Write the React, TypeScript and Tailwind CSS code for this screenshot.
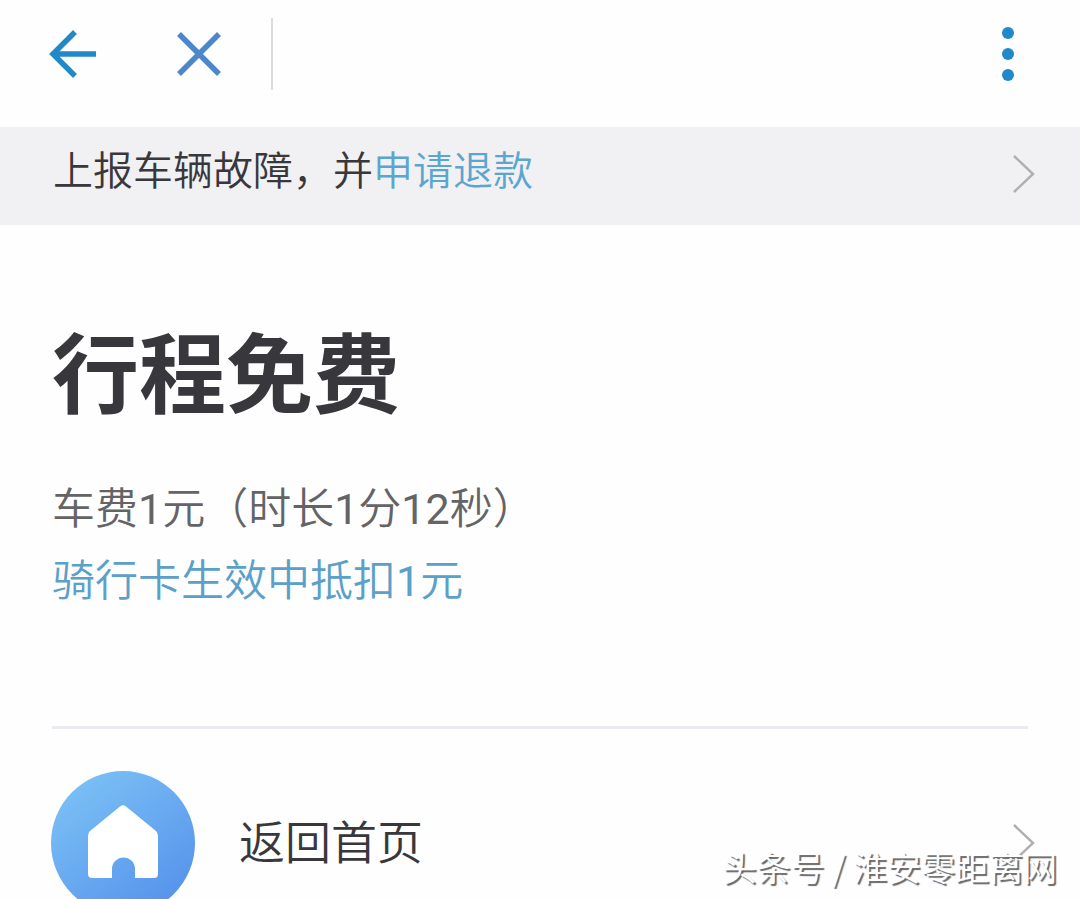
function Chevron() {
  return (
    <svg viewBox="0 0 24 40" className="h-10 w-6 shrink-0" fill="none" stroke="#b0b0b2" strokeWidth="2.5" aria-hidden="true">
      <path d="M2 2 L21 20 L2 38" />
    </svg>
  );
}

function TopBar() {
  return (
    <header className="flex h-[127px] items-start pl-12 pr-12">
      <button type="button" aria-label="返回" className="mt-7 flex h-[52px] w-[50px] items-center">
        <svg viewBox="0 0 50 52" className="h-[52px] w-[50px]" fill="none" stroke="#2389c6" strokeWidth="5.5" aria-hidden="true">
          <path d="M27 4 L5 26 L27 48 M5 26 H48" />
        </svg>
      </button>
      <button type="button" aria-label="关闭" className="ml-[76px] mt-7 flex h-[52px] w-[50px] items-center justify-center">
        <svg viewBox="0 0 50 52" className="h-[52px] w-[50px]" fill="none" stroke="#4c86cb" strokeWidth="5.5" aria-hidden="true">
          <path d="M5 6 L45 46 M45 6 L5 46" />
        </svg>
      </button>
      <div className="ml-[47px] mt-[18px] h-[72px] w-0.5 bg-[#dddbdd]" />
      <button type="button" aria-label="更多" className="ml-auto mt-6 flex h-[60px] w-12 justify-center">
        <svg viewBox="0 0 48 60" className="h-[60px] w-12" fill="#2089cb" aria-hidden="true">
          <circle cx="24" cy="9" r="6" />
          <circle cx="24" cy="30" r="6" />
          <circle cx="24" cy="51" r="6" />
        </svg>
      </button>
    </header>
  );
}

function Num({ value }: { value: number }) {
  return <span className="font-normal">{value}</span>;
}

export default function App() {
  return (
    <div className="relative h-screen overflow-hidden bg-[#fefefe] font-['Roboto','Noto_Sans_CJK_SC',sans-serif] font-[350] text-[#38383c]">
      <TopBar />
      <div className="flex h-[98px] items-start justify-between bg-[#f1f0f2] pl-[53px] pr-11">
        <p className="pt-[15px] text-[40px] leading-[60px]">
          上报车辆故障，并
          <a href="#refund" className="text-[#5ba5cf]">申请退款</a>
        </p>
        <div className="pt-[27px]">
          <Chevron />
        </div>
      </div>
      <main className="px-[52px]">
        <h1 className="mt-[92px] text-[87px] font-bold leading-[120px]">行程免费</h1>
        <p className="mt-9 text-[43px] leading-[72px] text-[#646466]">
          车费<Num value={1} />元（时长<Num value={1} />分<Num value={12} />秒）
        </p>
        <p className="text-[43px] leading-[72px] text-[#5ba0c8]">
          骑行卡生效中抵扣<Num value={1} />元
        </p>
        <hr className="mt-[109px] border-t-[3px] border-[#ebeaee]" />
      </main>
      <a href="#home" className="mt-[42px] flex h-36 items-center pl-[51px] pr-11">
        <svg viewBox="0 0 144 144" className="h-36 w-36 shrink-0" aria-hidden="true">
          <defs>
            <linearGradient id="homeFill" x1="0.15" y1="0.1" x2="0.75" y2="0.9">
              <stop offset="0" stopColor="#7abff5" />
              <stop offset="1" stopColor="#5896ec" />
            </linearGradient>
          </defs>
          <circle cx="72" cy="72" r="72" fill="url(#homeFill)" />
          <path
            fill="#fff"
            d="M69 35.5 Q72 33 75 35.5 L105 60 Q107 62 107 65 V103 Q107 107 103 107 H84 V98 A11.5 11.5 0 0 0 61 98 V107 H41 Q37 107 37 103 V65 Q37 62 39 60 Z"
          />
        </svg>
        <span className="ml-11 text-[46px] leading-[68px]">返回首页</span>
        <span className="ml-auto">
          <Chevron />
        </span>
      </a>
      <p className="absolute bottom-[7px] right-[23px] whitespace-pre font-['Noto_Sans_CJK_SC',sans-serif] text-[34px] leading-[50px] text-white [text-shadow:2px_2px_1px_#666]">
        头条号 / 淮安零距离网
      </p>
    </div>
  );
}
